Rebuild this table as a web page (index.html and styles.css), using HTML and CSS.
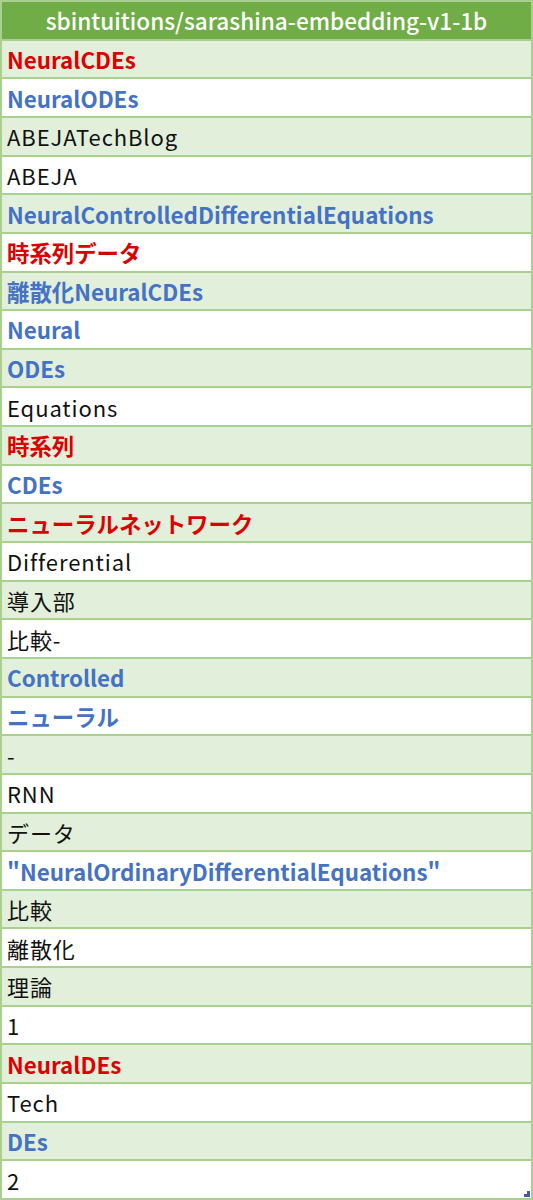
FILE: index.html
```html
<!DOCTYPE html>
<html lang="ja">
<head>
<meta charset="utf-8">
<link rel="stylesheet" href="styles.css">
</head>
<body>
<div class="table">
  <div class="row head">sbintuitions/sarashina-embedding-v1-1b</div>
  <div class="row g red">NeuralCDEs</div>
  <div class="row w blue">NeuralODEs</div>
  <div class="row g">ABEJATechBlog</div>
  <div class="row w">ABEJA</div>
  <div class="row g blue">NeuralControlledDifferentialEquations</div>
  <div class="row w red">時系列データ</div>
  <div class="row g blue">離散化NeuralCDEs</div>
  <div class="row w blue">Neural</div>
  <div class="row g blue">ODEs</div>
  <div class="row w">Equations</div>
  <div class="row g red">時系列</div>
  <div class="row w blue">CDEs</div>
  <div class="row g red">ニューラルネットワーク</div>
  <div class="row w">Differential</div>
  <div class="row g">導入部</div>
  <div class="row w">比較-</div>
  <div class="row g blue">Controlled</div>
  <div class="row w blue">ニューラル</div>
  <div class="row g">-</div>
  <div class="row w">RNN</div>
  <div class="row g">データ</div>
  <div class="row w blue">"NeuralOrdinaryDifferentialEquations"</div>
  <div class="row g">比較</div>
  <div class="row w">離散化</div>
  <div class="row g">理論</div>
  <div class="row w">1</div>
  <div class="row g red">NeuralDEs</div>
  <div class="row w">Tech</div>
  <div class="row g blue">DEs</div>
  <div class="row w last">2<span class="handle"></span></div>
</div>
</body>
</html>
```
FILE: styles.css
```css
html, body {
  margin: 0;
  padding: 0;
  background: #ffffff;
}
.table {
  width: 533px;
  height: 1200px;
  box-sizing: border-box;
  background: #a9d08e;
  padding: 2px;
  display: grid;
  grid-template-rows: repeat(31, 1fr);
  row-gap: 2px;
  font-family: "Noto Sans CJK JP", "Noto Sans", sans-serif;
  font-size: 22px;
  color: #111111;
}
.row {
  display: flex;
  align-items: center;
  padding-left: 5px;
  white-space: nowrap;
  overflow: hidden;
  letter-spacing: 0.9px;
}
.head {
  background: #70ad47;
  color: #ffffff;
  justify-content: center;
  padding-left: 0;
  font-weight: 500;
  font-size: 22.6px;
  letter-spacing: 0;
}
.g { background: #e2efda; }
.w { background: #ffffff; }
.red { color: #dc0000; font-weight: 700; letter-spacing: 0; font-size: 22.4px; }
.blue { color: #4472c4; font-weight: 700; letter-spacing: 0; font-size: 22.4px; }
.last { position: relative; }
.handle {
  position: absolute;
  right: 1px;
  bottom: 1px;
  width: 6px;
  height: 6px;
  background: #4a56a8;
  clip-path: polygon(100% 0, 100% 100%, 0 100%, 0 50%, 50% 50%, 50% 0);
}
```
